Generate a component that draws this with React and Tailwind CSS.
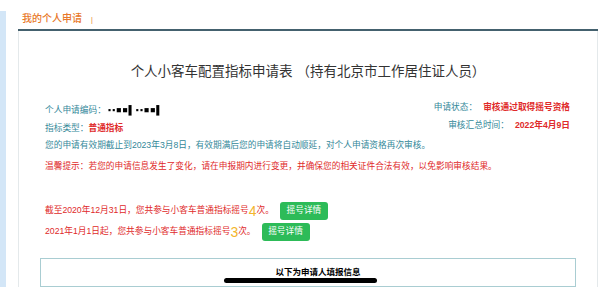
import React from "react";

const Btn = () => (
  <span className="ml-[6px] inline-flex h-[18px] w-[48px] items-center justify-center rounded-[3px] bg-[#2dbb58] text-[8.7px] leading-none text-white">
    摇号详情
  </span>
);

const App = () => {
  return (
    <div className="relative h-[300px] w-[600px] overflow-hidden bg-white font-['Liberation_Sans','Noto_Sans_CJK_SC',sans-serif]">
      <div className="flex h-[287px] overflow-hidden">
        <div className="mt-[11px] w-[6px] shrink-0 bg-[#d3e6f7]" />
        <div className="ml-[12px] flex w-[580px] flex-col">
          <div className="flex h-[31px] shrink-0 items-end border-b-2 border-[#44616e] pb-[4px] pl-[4px]">
            <span className="text-[10px] font-medium leading-[12px] text-[#e8782a]">我的个人申请</span>
            <span className="ml-[9px] text-[7px] leading-[10px] text-[#e8782a]">|</span>
          </div>
          <div className="flex-1 shrink-0 border-x border-[#e4e9eb] px-[21px]">
            <h1 className="mt-[31px] text-center text-[13.5px] leading-[20px] text-[#333]">
              个人小客车配置指标申请表 （持有北京市工作居住证人员）
            </h1>
            <div className="flex justify-between pl-[5px] pr-[6px] text-[8.7px] leading-[18px]">
              <div className="mt-[19px] text-[#338899]">
                <div>
                  个人申请编码：
                  <span className="ml-[2px] font-bold tracking-[1px] text-black blur-[0.7px]">▪▪■■▌▪▪■■▌</span>
                </div>
                <div>
                  指标类型：<span className="font-bold text-[#e02a2a]">普通指标</span>
                </div>
              </div>
              <div className="mt-[16px] text-right text-[#338899]">
                <div>
                  申请状态：<span className="ml-[6px] font-bold text-[#e02a2a]">审核通过取得摇号资格</span>
                </div>
                <div>
                  审核汇总时间：<span className="ml-[6px] font-bold text-[#e02a2a]">2022年4月9日</span>
                </div>
              </div>
            </div>
            <div className="pl-[5px] text-[8.7px] leading-[16px] text-[#338899]">
              您的申请有效期截止到2023年3月8日，有效期满后您的申请将自动顺延，对个人申请资格再次审核。
            </div>
            <div className="mt-[5px] pl-[5px] text-[8.7px] leading-[16px] text-[#e02a2a]">
              温馨提示：若您的申请信息发生了变化，请在申报期内进行变更，并确保您的相关证件合法有效，以免影响审核结果。
            </div>
            <div className="mt-[27px] flex h-[19px] items-center pl-[5px] text-[8.7px] text-[#e02a2a]">
              截至2020年12月31日，您共参与小客车普通指标摇号
              <span className="text-[14px] leading-none text-[#f3b52c]">4</span>次。
              <Btn />
            </div>
            <div className="mt-[2px] flex h-[19px] items-center pl-[5px] text-[8.7px] text-[#e02a2a]">
              2021年1月1日起，您共参与小客车普通指标摇号
              <span className="text-[14px] leading-none text-[#f3b52c]">3</span>次。
              <Btn />
            </div>
            <div className="mt-[17px] border border-[#a9cdd2]">
              <div className="flex h-[27px] items-center justify-center pl-[20px] text-[8.5px] font-bold text-black">
                以下为申请人填报信息
              </div>
              <div className="grid h-[20px] grid-cols-[220px_95px_1fr] border-t border-[#a9cdd2]">
                <div className="border-r border-[#a9cdd2]" />
                <div className="border-r border-[#a9cdd2]" />
                <div />
              </div>
            </div>
          </div>
        </div>
      </div>
      <div className="absolute left-[224px] top-[278px] h-[5px] w-[153px] rounded-full bg-black" />
    </div>
  );
};

export default App;
